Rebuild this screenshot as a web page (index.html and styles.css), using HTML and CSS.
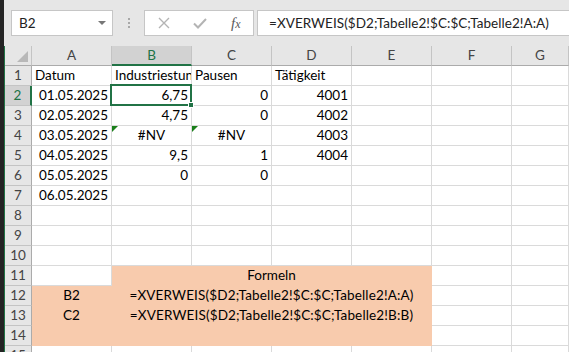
FILE: index.html
```html
<!DOCTYPE html>
<html lang="de">
<head>
    <meta charset="UTF-8">
    <title>Tabelle1</title>
    <link rel="stylesheet" href="styles.css">
</head>
<body>
    <div class="edge"></div>
    <div class="app">
        <div class="formula-bar">
            <div class="name-box">
                <span>B2</span>
                <span class="caret"></span>
            </div>
            <div class="grip"><i></i><i></i><i></i></div>
            <div class="fx-box">
                <svg class="icon" width="12" height="12" viewBox="0 0 12 12">
                    <path d="M1 1 L11 11 M11 1 L1 11" stroke="#b4b4b4" stroke-width="1.4" fill="none"/>
                </svg>
                <svg class="icon" width="14" height="11" viewBox="0 0 14 11">
                    <path d="M1 5.5 L5 9.5 L13 1" stroke="#b4b4b4" stroke-width="2" fill="none"/>
                </svg>
                <span class="fx"><i>f</i><i class="x">x</i></span>
            </div>
            <div class="formula-input">=XVERWEIS($D2;Tabelle2!$C:$C;Tabelle2!A:A)</div>
        </div>

        <div class="sheet">
            <!-- column headers -->
            <div class="h corner"><span class="corner-tri"></span></div>
            <div class="h">A</div>
            <div class="h active-col">B</div>
            <div class="h">C</div>
            <div class="h">D</div>
            <div class="h">E</div>
            <div class="h">F</div>
            <div class="h last">G</div>

            <!-- row 1 -->
            <div class="rh">1</div>
            <div class="c">Datum</div>
            <div class="c">Industriestunden</div>
            <div class="c">Pausen</div>
            <div class="c">Tätigkeit</div>
            <div class="c"></div><div class="c"></div><div class="c"></div>

            <!-- row 2 -->
            <div class="rh active-row">2</div>
            <div class="c r">01.05.2025</div>
            <div class="c r sel">6,75<span class="sel-box"><span class="handle"></span></span></div>
            <div class="c r">0</div>
            <div class="c r">4001</div>
            <div class="c"></div><div class="c"></div><div class="c"></div>

            <!-- row 3 -->
            <div class="rh">3</div>
            <div class="c r">02.05.2025</div>
            <div class="c r">4,75</div>
            <div class="c r">0</div>
            <div class="c r">4002</div>
            <div class="c"></div><div class="c"></div><div class="c"></div>

            <!-- row 4 -->
            <div class="rh">4</div>
            <div class="c r">03.05.2025</div>
            <div class="c m err">#NV</div>
            <div class="c m err">#NV</div>
            <div class="c r">4003</div>
            <div class="c"></div><div class="c"></div><div class="c"></div>

            <!-- row 5 -->
            <div class="rh">5</div>
            <div class="c r">04.05.2025</div>
            <div class="c r">9,5</div>
            <div class="c r">1</div>
            <div class="c r">4004</div>
            <div class="c"></div><div class="c"></div><div class="c"></div>

            <!-- row 6 -->
            <div class="rh">6</div>
            <div class="c r">05.05.2025</div>
            <div class="c r">0</div>
            <div class="c r">0</div>
            <div class="c"></div><div class="c"></div><div class="c"></div><div class="c"></div>

            <!-- row 7 -->
            <div class="rh">7</div>
            <div class="c r">06.05.2025</div>
            <div class="c"></div><div class="c"></div><div class="c"></div><div class="c"></div><div class="c"></div><div class="c"></div>

            <div class="rh">8</div>
            <div class="c"></div><div class="c"></div><div class="c"></div><div class="c"></div><div class="c"></div><div class="c"></div><div class="c"></div>
            <div class="rh">9</div>
            <div class="c"></div><div class="c"></div><div class="c"></div><div class="c"></div><div class="c"></div><div class="c"></div><div class="c"></div>
            <div class="rh">10</div>
            <div class="c"></div><div class="c"></div><div class="c"></div><div class="c"></div><div class="c"></div><div class="c"></div><div class="c"></div>

            <!-- formulas block -->
            <div class="rh">11</div>
            <div class="c"></div>
            <div class="c m fill span4">Formeln</div>
            <div class="c"></div><div class="c"></div>

            <div class="rh">12</div>
            <div class="c m fill">B2</div>
            <div class="c m fill span4 code">=XVERWEIS($D2;Tabelle2!$C:$C;Tabelle2!A:A)</div>
            <div class="c"></div><div class="c"></div>

            <div class="rh">13</div>
            <div class="c m fill">C2</div>
            <div class="c m fill span4 code">=XVERWEIS($D2;Tabelle2!$C:$C;Tabelle2!B:B)</div>
            <div class="c"></div><div class="c"></div>

            <div class="rh">14</div>
            <div class="c fill"></div>
            <div class="c fill span4"></div>
            <div class="c"></div><div class="c"></div>

            <div class="rh">15</div>
            <div class="c"></div><div class="c"></div><div class="c"></div><div class="c"></div><div class="c"></div><div class="c"></div><div class="c"></div>
        </div>
    </div>
</body>
</html>
```

FILE: styles.css
```css
* {
    box-sizing: border-box;
}

body {
    margin: 0;
    width: 569px;
    height: 352px;
    overflow: hidden;
    display: flex;
    font-family: Lato, 'Liberation Sans', sans-serif;
    background: #ffffff;
}

.edge {
    width: 4px;
    background: #242424;
}

.app {
    flex: 1;
    min-width: 0;
}

/* formula bar */
.formula-bar {
    height: 46px;
    display: flex;
    align-items: flex-start;
    padding-top: 10px;
    background: #e6e6e6;
}

.name-box {
    margin-left: 7px;
    width: 102px;
    height: 26px;
    border: 1px solid #c6c6c6;
    background: #ffffff;
    display: flex;
    align-items: center;
    justify-content: space-between;
    padding: 0 6px 0 7px;
    font-size: 13.5px;
    color: #222;
}

.caret {
    width: 0;
    height: 0;
    border-left: 4px solid transparent;
    border-right: 4px solid transparent;
    border-top: 4px solid #777;
}

.grip {
    width: 31px;
    height: 26px;
    display: flex;
    flex-direction: column;
    align-items: center;
    justify-content: center;
    gap: 2px;
}

.grip i {
    width: 2px;
    height: 2px;
    background: #a8a8a8;
}

.fx-box {
    width: 110px;
    height: 26px;
    border: 1px solid #c6c6c6;
    background: #ffffff;
    display: flex;
    align-items: center;
    padding-left: 13px;
}

.fx-box .icon {
    margin-right: 23px;
}

.fx-box .icon + .icon {
    margin-right: 24px;
}

.fx {
    font-family: 'Liberation Serif', serif;
    color: #5a5a5a;
    font-size: 15px;
}

.fx .x {
    font-size: 12px;
}

.formula-input {
    flex: 1;
    margin-left: 3px;
    height: 26px;
    border: 1px solid #c6c6c6;
    border-right: none;
    background: #ffffff;
    padding-left: 11px;
    line-height: 24px;
    font-size: 13.5px;
    letter-spacing: 0.05px;
    color: #222;
    white-space: nowrap;
    overflow: hidden;
}

/* sheet grid */
.sheet {
    display: grid;
    grid-template-columns: 27px repeat(6, 80px) 1fr;
    grid-auto-rows: 20px;
    border-left: 1px solid #217346;
    font-size: 13.5px;
}

.h, .rh {
    background: #e6e6e6;
    color: #444;
    text-align: center;
    line-height: 19px;
    border-right: 1px solid #c4c4c4;
    border-bottom: 1px solid #ababab;
}

.rh {
    border-bottom-color: #c4c4c4;
    border-right-color: #ababab;
}

.corner {
    position: relative;
}

.corner-tri {
    position: absolute;
    right: 3px;
    bottom: 3px;
    width: 0;
    height: 0;
    border-left: 11px solid transparent;
    border-bottom: 11px solid #b8b8b8;
}

.active-col {
    background: #d2d2d2;
    color: #217346;
    border-bottom: 2px solid #217346;
}

.active-row {
    background: #d2d2d2;
    color: #217346;
    border-right: 2px solid #217346;
}

.c {
    position: relative;
    border-right: 1px solid #dadada;
    border-bottom: 1px solid #dadada;
    padding: 0 3px;
    line-height: 19px;
    white-space: nowrap;
    overflow: hidden;
    color: #000;
}

.c.r {
    text-align: right;
}

.c.m {
    text-align: center;
}

.c.code {
    letter-spacing: 0.15px;
}

.c.sel {
    overflow: visible;
}

.sel-box {
    position: absolute;
    left: -2px;
    top: -2px;
    right: -1px;
    bottom: -1px;
    border: 2px solid #217346;
    z-index: 2;
}

.handle {
    position: absolute;
    right: -4px;
    bottom: -4px;
    width: 6px;
    height: 6px;
    background: #217346;
    border: 1px solid #ffffff;
}

.err::before {
    content: "";
    position: absolute;
    left: 0;
    top: 0;
    border-top: 6px solid #1a7f1a;
    border-right: 6px solid transparent;
}

.fill {
    background: #f8cbad;
    border-color: #f8cbad;
}

.span4 {
    grid-column: span 4;
}
```
